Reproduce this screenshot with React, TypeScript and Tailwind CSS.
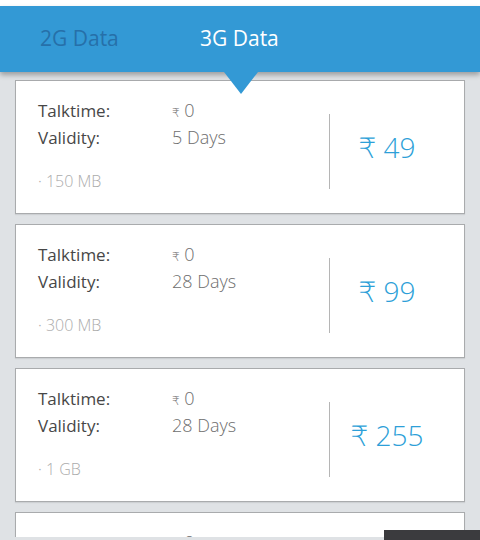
import React from "react";

type Plan = { talktime: string; validity: string; data: string; price: string };

const plans: Plan[] = [
  { talktime: "0", validity: "5 Days", data: "150 MB", price: "49" },
  { talktime: "0", validity: "28 Days", data: "300 MB", price: "99" },
  { talktime: "0", validity: "28 Days", data: "1 GB", price: "255" },
  { talktime: "0", validity: "28 Days", data: "2 GB", price: "455" },
];

const PlanCard = ({ plan }: { plan: Plan }) => (
  <article className="flex h-[134px] border border-[#a9abad] bg-white shadow-[0_1px_1px_rgba(0,0,0,0.08)]">
    <div className="w-[313px] pl-[22px] pt-[16px]">
      <div className="flex h-[27px] items-center">
        <span className="w-[134px] text-[17px] text-[#474747]">Talktime:</span>
        <span className="text-[18px] font-light text-[#6e6e6e]">
          <span className="text-[12px]">₹</span> {plan.talktime}
        </span>
      </div>
      <div className="flex h-[27px] items-center">
        <span className="w-[134px] text-[17px] text-[#474747]">Validity:</span>
        <span className="text-[18px] font-light text-[#6e6e6e]">{plan.validity}</span>
      </div>
      <p className="mt-[18px] text-[16px] font-light text-[#ababab]">· {plan.data}</p>
    </div>
    <div className="mt-[33px] h-[75px] w-px bg-[#b5b5b5]" />
    <div className="flex w-[114px] items-center justify-center pb-[1px]">
      <span className="text-[28px] font-light text-[#2d9fd8]">₹ {plan.price}</span>
    </div>
  </article>
);

export default function App() {
  return (
    <div
      className="relative h-[540px] overflow-hidden bg-[#dfe2e5]"
      style={{ fontFamily: '"Open Sans", "DejaVu Sans", sans-serif' }}
    >
      <div className="h-[6px] bg-white" />
      <header className="relative z-10 flex h-[66px] items-center bg-[#3399d5] pl-[40px] shadow-[0_3px_5px_rgba(0,0,0,0.3)]">
        <span className="w-[160px] text-[21px] text-[#2670a9]">2G Data</span>
        <span className="text-[21px] text-white">3G Data</span>
        <span className="absolute left-[224px] top-[66px] h-0 w-0 border-l-[17px] border-r-[17px] border-t-[22px] border-l-transparent border-r-transparent border-t-[#3399d5]" />
      </header>
      <main className="flex flex-col gap-[10px] px-[15px] pt-[8px]">
        {plans.map((plan, i) => (
          <PlanCard key={i} plan={plan} />
        ))}
      </main>
      <div className="absolute bottom-0 left-0 right-0 h-[3px] bg-[#dfe2e5]" />
      <div className="absolute bottom-0 right-0 h-[10px] w-[96px] bg-[#3b3b3e]" />
    </div>
  );
}
